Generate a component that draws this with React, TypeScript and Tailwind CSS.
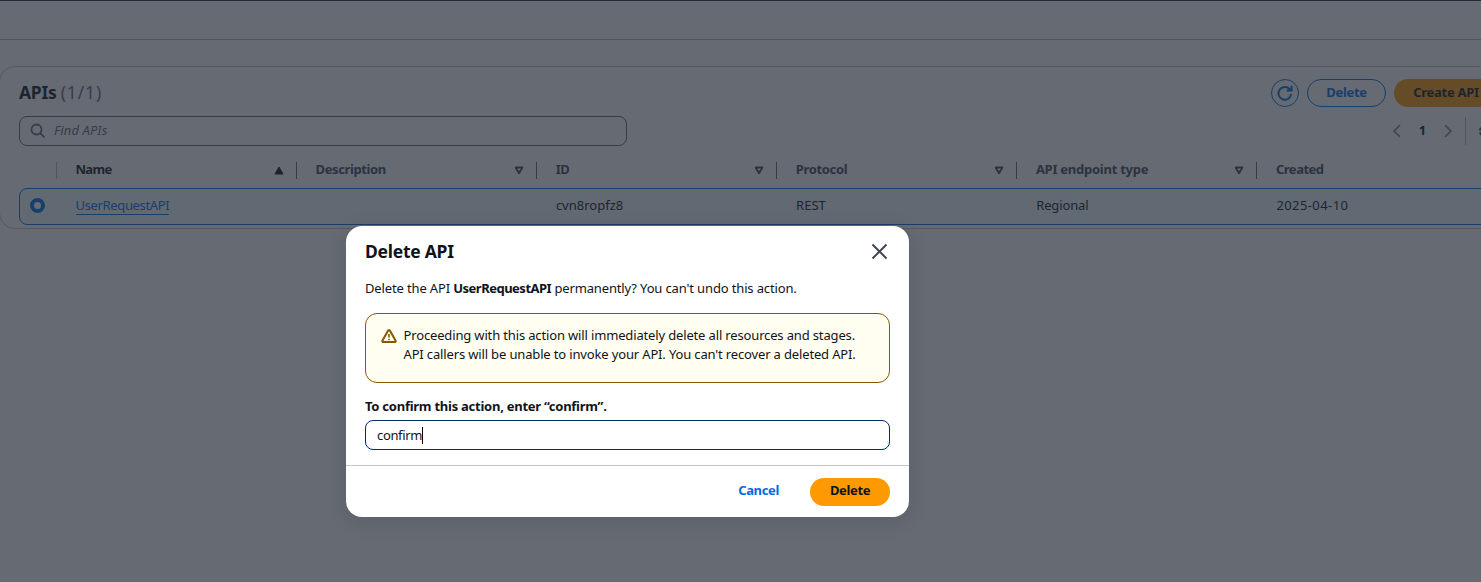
import React from "react";

type Column = { label: string; value: string; sort?: "asc" | "none"; labelClass?: string; valueClass?: string };

const columns: Column[] = [
  { label: "Name", value: "UserRequestAPI", sort: "asc", labelClass: "tracking-[-0.7px]", valueClass: "tracking-[-0.35px]" },
  { label: "Description", value: "", sort: "none", labelClass: "tracking-[-0.4px]" },
  { label: "ID", value: "cvn8ropfz8", sort: "none", labelClass: "tracking-[-0.6px]" },
  { label: "Protocol", value: "REST", sort: "none", labelClass: "tracking-[-0.35px]" },
  { label: "API endpoint type", value: "Regional", sort: "none", labelClass: "tracking-[-0.26px]", valueClass: "tracking-[-0.15px]" },
  { label: "Created", value: "2025-04-10", labelClass: "tracking-[-0.5px]", valueClass: "tracking-[0.4px]" },
];

function SortIcon({ sort }: { sort: "asc" | "none" }) {
  return (
    <svg width="10" height="9" viewBox="0 0 10 9" className="shrink-0">
      {sort === "asc" ? (
        <path d="M5 1 L9 8 H1 Z" fill="#0f141a" stroke="#0f141a" strokeLinejoin="round" />
      ) : (
        <path d="M1.6 1.5 H8.4 L5 7.3 Z" fill="none" stroke="#424650" strokeWidth="1.8" strokeLinejoin="round" />
      )}
    </svg>
  );
}

function Chevron({ flip }: { flip?: boolean }) {
  return (
    <svg width="8" height="14" viewBox="0 0 8 14" fill="none" stroke="#8c8c94" strokeWidth="1.8" className="shrink-0">
      <path d={flip ? "M1 1.2 L7 7 L1 12.8" : "M7 1.2 L1 7 L7 12.8"} />
    </svg>
  );
}

function ApiTable() {
  return (
    <div className="pl-[19px]">
      <div className="flex h-[36px] w-[1600px] items-center">
        <div className="h-[17px] w-[38px] shrink-0 border-r border-[#b4b4bb]" />
        {columns.map((c, i) => (
          <div
            key={c.label}
            className={`flex h-[17px] w-[240.1px] shrink-0 items-center justify-between pl-[18.5px] pr-[12.5px] text-[13px] font-bold ${
              i === 0 ? "text-[#0f141a]" : "text-[#424650]"
            } ${i < 5 ? "border-r border-[#656871]" : ""}`}
          >
            <span className={c.labelClass}>{c.label}</span>
            {c.sort && <SortIcon sort={c.sort} />}
          </div>
        ))}
      </div>
      <div className="flex h-[37px] w-[1600px] items-center rounded-lg border border-[#006ce0] bg-[#f0fbff] pb-px text-[13px] text-[#0f141a]">
        <div className="flex w-[37px] shrink-0 pb-px pl-[10px]">
          <span className="size-[15px] rounded-full border-[4.6px] border-[#006ce0] bg-white" />
        </div>
        {columns.map((c, i) => (
          <div key={c.label} className={`w-[240.2px] shrink-0 pl-[18.5px] ${c.valueClass ?? ""}`}>
            {i === 0 ? (
              <a className="border-b border-[#006ce0] text-[#006ce0]">{c.value}</a>
            ) : (
              c.value
            )}
          </div>
        ))}
      </div>
    </div>
  );
}

function ApisPanel() {
  return (
    <section className="-ml-px mt-[26px] h-[163px] w-[1620px] rounded-2xl border border-[#c6c6cd] bg-white">
      <div className="flex h-[49px] w-[1481px] items-center justify-between pl-[19px]">
        <h1 className="whitespace-nowrap pt-px text-[17.5px] font-bold tracking-[-0.3px] text-[#0f141a]">
          APIs <span className="font-normal tracking-[0.9px] text-[#656871]">(1/1)</span>
        </h1>
        <div className="flex w-[210px] shrink-0 gap-2 pt-[3px]">
          <button className="flex size-7 shrink-0 items-center justify-center rounded-full border border-[#006ce0]">
            <svg width="16" height="16" viewBox="0 0 16 16" fill="none" stroke="#006ce0" strokeWidth="2">
              <path d="M14.2 9.2 A6.4 6.4 0 1 1 12.6 4 L14 5.2" />
              <path d="M14.6 0.8 V5.6 H9.8" />
            </svg>
          </button>
          <button className="h-7 w-[79px] shrink-0 rounded-full border border-[#006ce0] pb-px text-[13px] font-bold tracking-[-0.3px] text-[#006ce0]">
            Delete
          </button>
          <button className="h-7 w-[104px] shrink-0 rounded-full bg-[#ff9900] pb-px text-[13px] font-bold tracking-[-0.3px] text-[#0f141a]">
            Create API
          </button>
        </div>
      </div>
      <div className="flex h-[29px] w-[1482px] items-center justify-between pl-[19px]">
        <div className="flex h-[30px] w-[608px] items-center rounded-lg border border-[#656871] px-[10px]">
          <svg width="16" height="16" viewBox="0 0 16 16" fill="none" stroke="#656871" strokeWidth="1.8">
            <circle cx="6.5" cy="6.5" r="5" />
            <path d="M10.2 10.2 L14.5 14.3" />
          </svg>
          <span className="pl-[8px] text-[13px] italic tracking-[0.1px] text-[#656871]">Find APIs</span>
        </div>
        <div className="flex w-[89px] shrink-0 items-center overflow-hidden pt-px">
          <Chevron />
          <span className="w-[43px] shrink-0 text-center text-[13px] font-bold text-[#0f141a]">1</span>
          <Chevron flip />
          <span className="ml-[13px] h-7 w-px shrink-0 bg-[#b4b4bb]" />
          <svg className="ml-[12px] shrink-0" width="16" height="16" viewBox="0 0 16 16" fill="none" stroke="#424650" strokeWidth="2">
            <circle cx="8" cy="8" r="6" strokeDasharray="3 1.7" />
            <circle cx="8" cy="8" r="2" />
          </svg>
        </div>
      </div>
      <div className="pt-[7px]">
        <ApiTable />
      </div>
    </section>
  );
}

function DeleteDialog() {
  return (
    <div
      role="dialog"
      className="flex h-[291px] w-[563px] flex-col rounded-2xl bg-white text-[13px] text-[#0f141a] shadow-[0_4px_20px_1px_rgba(0,7,22,0.1)]"
    >
      <div className="flex h-[50px] items-center justify-between pl-[19px] pr-[21px]">
        <h2 className="text-[17.5px] font-bold tracking-[-0.25px]">Delete API</h2>
        <svg width="17" height="17" viewBox="0 0 17 17" stroke="#424650" strokeWidth="2">
          <path d="M1.5 1.5 L15.5 15.5 M15.5 1.5 L1.5 15.5" />
        </svg>
      </div>
      <div className="flex flex-1 flex-col px-[19px]">
        <p className="mt-[3px] leading-[19px] tracking-[-0.14px]">
          Delete the API <b className="tracking-[-0.5px]">UserRequestAPI</b> permanently? You can't undo this action.
        </p>
        <div className="mt-[15px] flex h-[70px] gap-[7px] rounded-xl border border-[#855900] bg-[#fffef0] pl-[14.5px] pt-[12px] leading-[19px]">
          <svg className="mt-[2px] shrink-0" width="16" height="16" viewBox="0 0 16 16" fill="none" stroke="#855900" strokeWidth="2" strokeLinejoin="round">
            <path d="M7.3 2.2 H8.7 L14.8 13 L14.3 14 H1.7 L1.2 13 Z" />
            <path d="M8 6 V9.6 M8 10.7 V12.2" strokeWidth="1.6" />
          </svg>
          <div className="whitespace-nowrap tracking-[-0.15px]">
            <div>Proceeding with this action will immediately delete all resources and stages.</div>
            <div>API callers will be unable to invoke your API. You can't recover a deleted API.</div>
          </div>
        </div>
        <label className="mt-[14px] font-bold leading-[19px] tracking-[-0.25px]">To confirm this action, enter “confirm”.</label>
        <div className="mt-[4px] flex h-[30px] items-center rounded-lg border border-[#002b66] pl-[11px]">
          <span className="pt-[2px] tracking-[-0.35px]">confirm</span>
          <span className="h-[17px] w-px bg-black" />
        </div>
      </div>
      <div className="flex h-[52px] items-center justify-end gap-[31px] border-t border-[#c6c6cd] pr-[19px] font-bold tracking-[-0.35px]">
        <button className="pb-[2px] text-[#006ce0]">Cancel</button>
        <button className="h-7 w-20 rounded-full bg-[#ff9900] pb-[2px]">Delete</button>
      </div>
    </div>
  );
}

export default function App() {
  return (
    <div className="relative h-[582px] w-full overflow-hidden bg-white font-['Noto_Sans',sans-serif]">
      <div className="h-[40px] border-b border-b-[#b4b4bb] border-t border-t-[#232b37] bg-white" />
      <ApisPanel />
      <div className="absolute inset-0 flex bg-[rgba(35,43,55,0.7)] pl-[346px] pt-[226px]">
        <DeleteDialog />
      </div>
    </div>
  );
}
